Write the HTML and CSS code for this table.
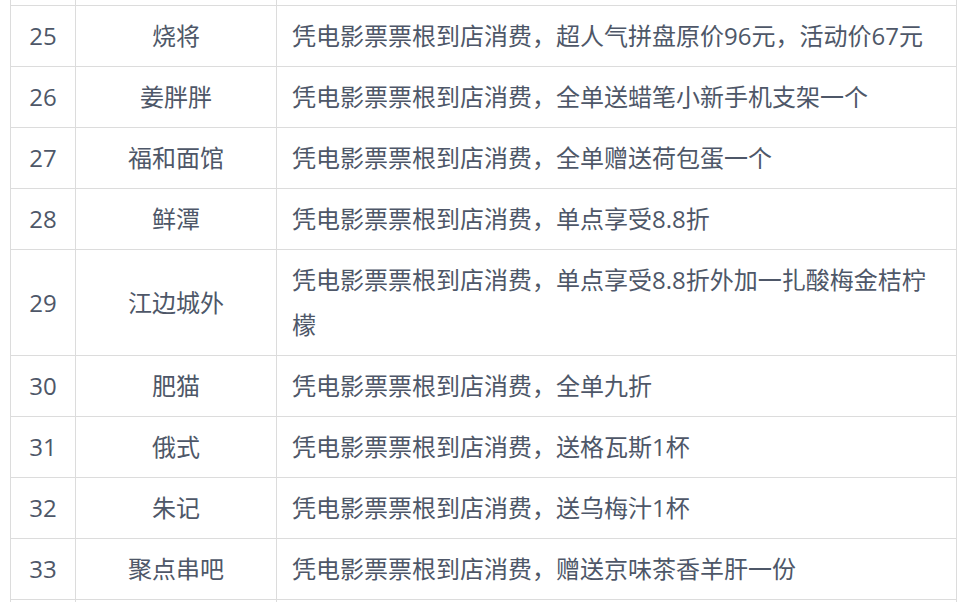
FILE: index.html
```html
<!DOCTYPE html>
<html lang="zh-CN">
<head>
<meta charset="utf-8">
<title>优惠商家</title>
<link rel="stylesheet" href="styles.css">
</head>
<body>
<table class="deals">
  <colgroup>
    <col class="c-no">
    <col class="c-name">
    <col class="c-desc">
  </colgroup>
  <tbody>
    <tr class="blank"><td class="no"></td><td class="name"></td><td class="desc"></td></tr>
    <tr><td class="no">25</td><td class="name">烧将</td><td class="desc">凭电影票票根到店消费，超人气拼盘原价96元，活动价67元</td></tr>
    <tr><td class="no">26</td><td class="name">姜胖胖</td><td class="desc">凭电影票票根到店消费，全单送蜡笔小新手机支架一个</td></tr>
    <tr><td class="no">27</td><td class="name">福和面馆</td><td class="desc">凭电影票票根到店消费，全单赠送荷包蛋一个</td></tr>
    <tr><td class="no">28</td><td class="name">鲜潭</td><td class="desc">凭电影票票根到店消费，单点享受8.8折</td></tr>
    <tr><td class="no">29</td><td class="name">江边城外</td><td class="desc">凭电影票票根到店消费，单点享受8.8折外加一扎酸梅金桔柠檬</td></tr>
    <tr><td class="no">30</td><td class="name">肥猫</td><td class="desc">凭电影票票根到店消费，全单九折</td></tr>
    <tr><td class="no">31</td><td class="name">俄式</td><td class="desc">凭电影票票根到店消费，送格瓦斯1杯</td></tr>
    <tr><td class="no">32</td><td class="name">朱记</td><td class="desc">凭电影票票根到店消费，送乌梅汁1杯</td></tr>
    <tr><td class="no">33</td><td class="name">聚点串吧</td><td class="desc">凭电影票票根到店消费，赠送京味茶香羊肝一份</td></tr>
    <tr class="blank"><td class="no"></td><td class="name"></td><td class="desc"></td></tr>
  </tbody>
</table>
</body>
</html>
```

FILE: styles.css
```css
html, body {
  margin: 0;
  padding: 0;
  background: #ffffff;
  overflow: hidden;
}

.deals {
  border-collapse: collapse;
  table-layout: fixed;
  width: 947px;
  margin: -56px 0 0 10px;
  font-family: "Open Sans", "Noto Sans CJK SC", sans-serif;
  font-size: 24px;
  line-height: 45px;
  color: #4e5768;
}

.c-no { width: 65px; }
.c-name { width: 201px; }

.deals td {
  border: 1px solid #dcdcdc;
  padding: 7px 15px 8px;
  vertical-align: middle;
}

.deals .no,
.deals .name {
  text-align: center;
  padding-left: 4px;
  padding-right: 4px;
}

.deals .desc {
  text-align: left;
}

.deals .blank td {
  height: 45px;
}
```
